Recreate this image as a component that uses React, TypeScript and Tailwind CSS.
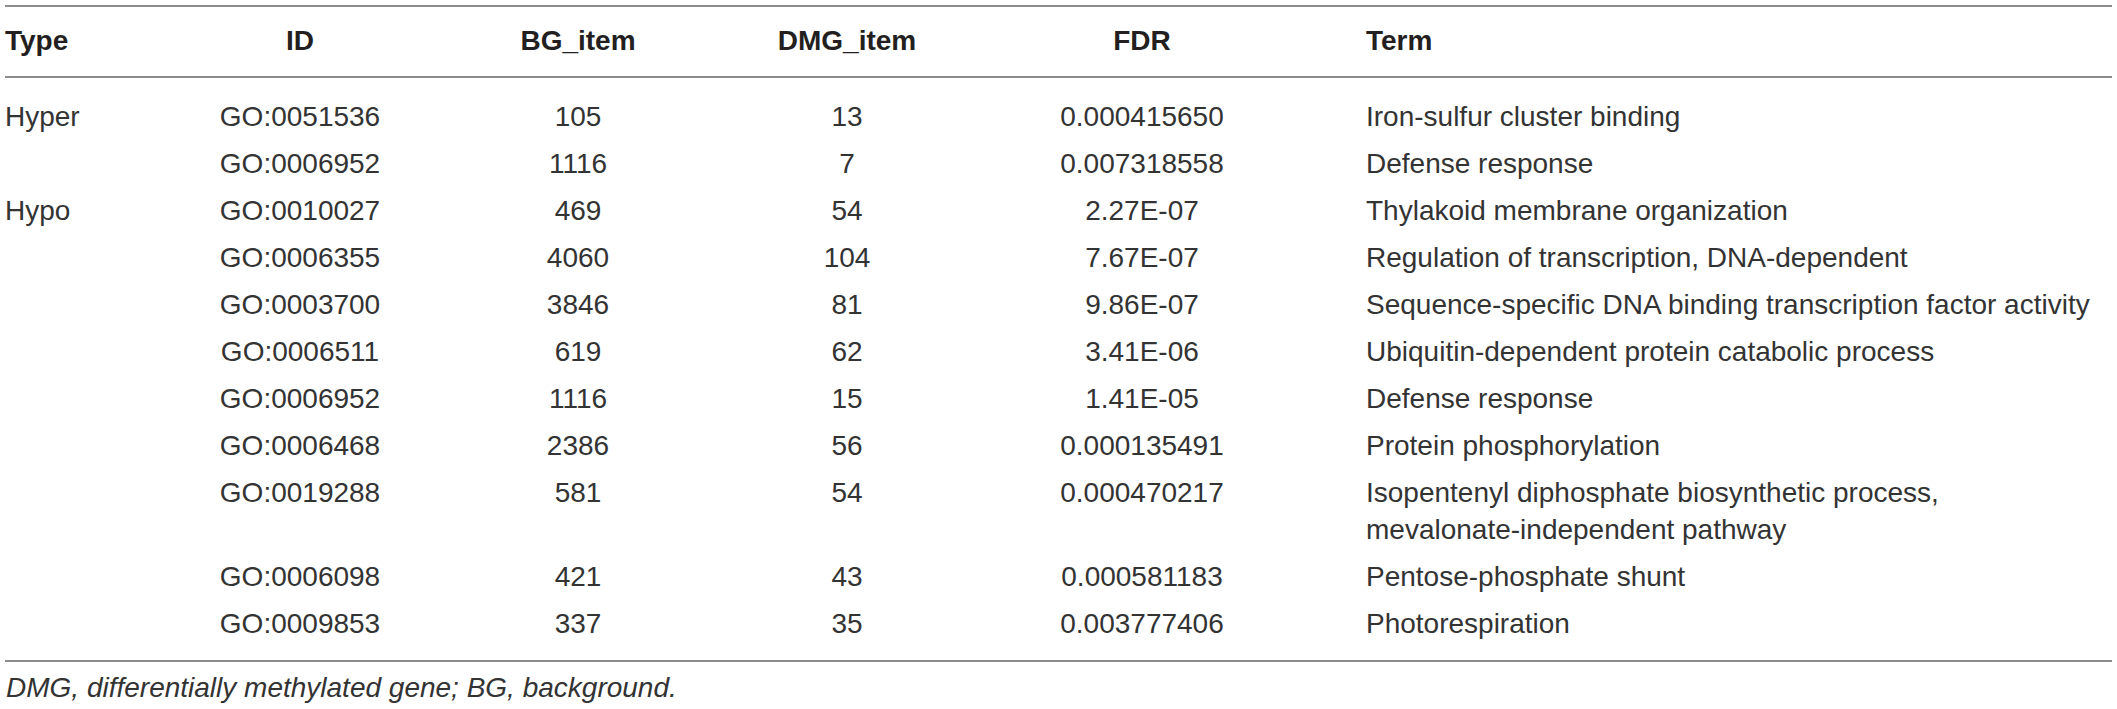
import React from 'react';

interface Row {
  type: string;
  id: string;
  bg: string;
  dmg: string;
  fdr: string;
  term: React.ReactNode;
}

const rows: Row[] = [
  { type: 'Hyper', id: 'GO:0051536', bg: '105', dmg: '13', fdr: '0.000415650', term: 'Iron-sulfur cluster binding' },
  { type: '', id: 'GO:0006952', bg: '1116', dmg: '7', fdr: '0.007318558', term: 'Defense response' },
  { type: 'Hypo', id: 'GO:0010027', bg: '469', dmg: '54', fdr: '2.27E-07', term: 'Thylakoid membrane organization' },
  { type: '', id: 'GO:0006355', bg: '4060', dmg: '104', fdr: '7.67E-07', term: 'Regulation of transcription, DNA-dependent' },
  { type: '', id: 'GO:0003700', bg: '3846', dmg: '81', fdr: '9.86E-07', term: 'Sequence-specific DNA binding transcription factor activity' },
  { type: '', id: 'GO:0006511', bg: '619', dmg: '62', fdr: '3.41E-06', term: 'Ubiquitin-dependent protein catabolic process' },
  { type: '', id: 'GO:0006952', bg: '1116', dmg: '15', fdr: '1.41E-05', term: 'Defense response' },
  { type: '', id: 'GO:0006468', bg: '2386', dmg: '56', fdr: '0.000135491', term: 'Protein phosphorylation' },
  {
    type: '',
    id: 'GO:0019288',
    bg: '581',
    dmg: '54',
    fdr: '0.000470217',
    term: (
      <>
        Isopentenyl diphosphate biosynthetic process,
        <br />
        mevalonate-independent pathway
      </>
    ),
  },
  { type: '', id: 'GO:0006098', bg: '421', dmg: '43', fdr: '0.000581183', term: 'Pentose-phosphate shunt' },
  { type: '', id: 'GO:0009853', bg: '337', dmg: '35', fdr: '0.003777406', term: 'Photorespiration' },
];

export default function App() {
  return (
    <div className="min-h-screen bg-white font-['Liberation_Sans',Arial,sans-serif] text-[28px] leading-[37px] text-[#231f20]">
      <table className="ml-[5px] mt-[5px] w-[2107px] table-fixed border-separate border-spacing-0">
        <colgroup>
          <col className="w-[195px]" />
          <col className="w-[200px]" />
          <col className="w-[356px]" />
          <col className="w-[182px]" />
          <col className="w-[408px]" />
          <col />
        </colgroup>
        <thead>
          <tr>
            <th className="border-y-2 border-[#8c8c8c] pt-[15px] pb-[17px] text-left font-bold">Type</th>
            <th className="border-y-2 border-[#8c8c8c] pt-[15px] pb-[17px] text-center font-bold">ID</th>
            <th className="border-y-2 border-[#8c8c8c] pt-[15px] pb-[17px] text-center font-bold">BG_item</th>
            <th className="border-y-2 border-[#8c8c8c] pt-[15px] pb-[17px] text-center font-bold">DMG_item</th>
            <th className="border-y-2 border-[#8c8c8c] pt-[15px] pb-[17px] text-center font-bold">FDR</th>
            <th className="border-y-2 border-[#8c8c8c] pt-[15px] pb-[17px] pl-[20px] text-left font-bold">Term</th>
          </tr>
        </thead>
        <tbody className="text-[#333333]">
          {rows.map((r, i) => {
            const first = i === 0;
            const last = i === rows.length - 1;
            const pad = first
              ? 'pt-[20px] pb-[5px]'
              : last
                ? 'pt-[5px] pb-[18px] border-b-2 border-[#8c8c8c]'
                : 'py-[5px]';
            return (
              <tr key={i} className="align-top">
                <td className={`${pad} text-left`}>{r.type}</td>
                <td className={`${pad} text-center`}>{r.id}</td>
                <td className={`${pad} text-center`}>{r.bg}</td>
                <td className={`${pad} text-center`}>{r.dmg}</td>
                <td className={`${pad} text-center`}>{r.fdr}</td>
                <td className={`${pad} pl-[20px] text-left`}>{r.term}</td>
              </tr>
            );
          })}
        </tbody>
      </table>
      <p className="ml-[6px] mt-[7px] italic text-[#333333]">
        DMG, differentially methylated gene; BG, background.
      </p>
    </div>
  );
}
